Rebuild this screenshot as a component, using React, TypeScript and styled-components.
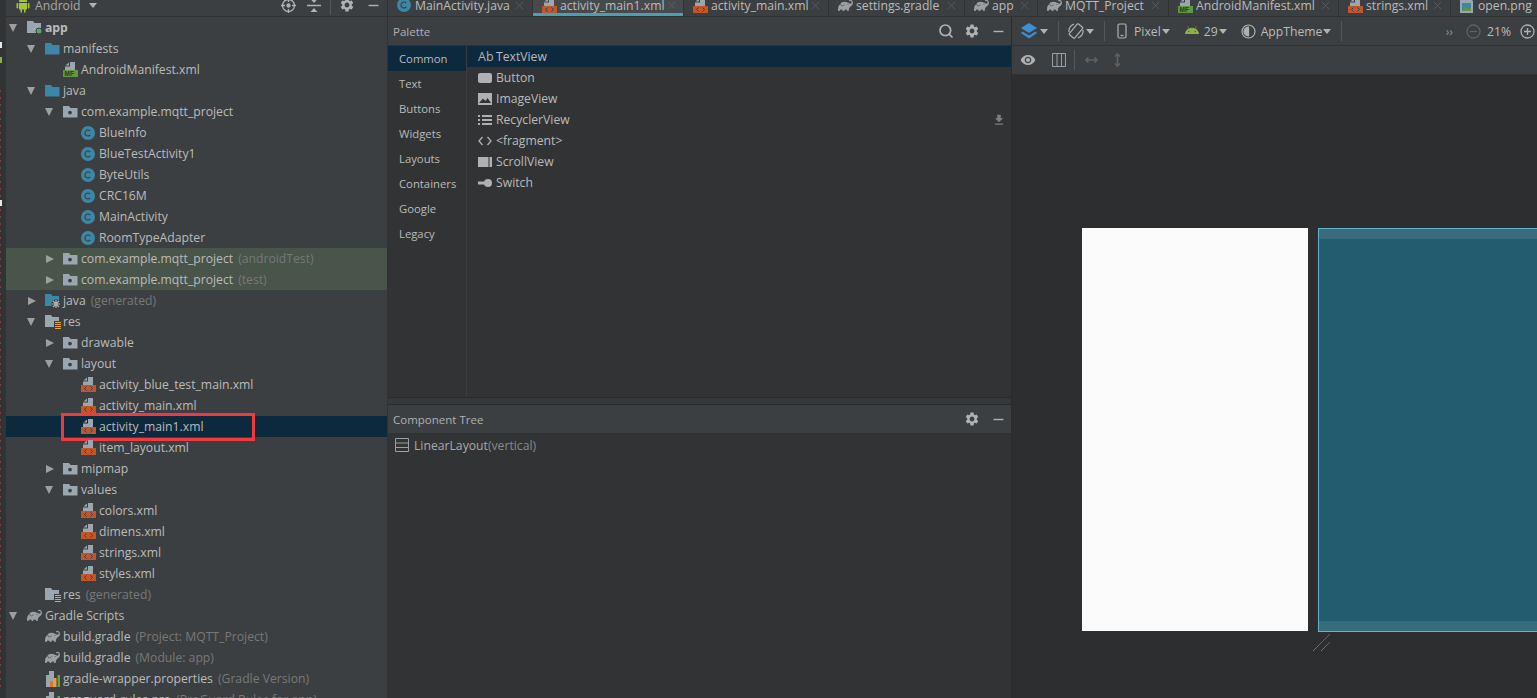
import React from 'react'
import styled, { createGlobalStyle } from 'styled-components'
import { MdSettings, MdRemove, MdVisibility, MdFileDownload } from 'react-icons/md'
import { FaAndroid } from 'react-icons/fa'
import { SiGradle } from 'react-icons/si'
import { Search, X } from 'lucide-react'

const GlobalStyle = createGlobalStyle`
  html, body {
    margin: 0;
    height: 698px;
    overflow: hidden;
    background: #3c3f41;
  }
  #root {
    height: 698px;
  }
  * {
    box-sizing: border-box;
  }
`

const Shell = styled.div`
  display: grid;
  grid-template-columns: 6px 382px 1fr;
  height: 698px;
  overflow: hidden;
  color: #bbbbbb;
  font-family: 'Open Sans', 'Liberation Sans', sans-serif;
  font-size: 12.2px;
  white-space: nowrap;
`

const Gutter = styled.div`
  background:
    repeating-linear-gradient(180deg, #8a3a3a 0 2px, transparent 2px 7px) left 90px / 1px 600px no-repeat,
    #313335;
  position: relative;
`

const GutterMark = styled.span<{ $top: number; $color: string }>`
  position: absolute;
  left: 0;
  top: ${(p) => p.$top}px;
  width: 2px;
  height: 6px;
  background: ${(p) => p.$color};
`

const ProjectPane = styled.aside`
  display: flex;
  flex-direction: column;
  overflow: hidden;
  background: #3c3f41;
  border-right: 1px solid #323232;
`

const TopBar = styled.div`
  flex: none;
  height: 17px;
  border-bottom: 1px solid #323232;
  overflow: hidden;
`

const ProjectHeaderRow = styled.div`
  display: flex;
  align-items: center;
  height: 22px;
  margin-top: -6px;
  padding-left: 10px;
  color: #a8a8a8;
`

const HeaderTool = styled.span<{ $left?: number }>`
  flex: none;
  display: inline-flex;
  align-items: center;
  justify-content: center;
  width: 26px;
  color: #afb1b3;
  margin-left: ${(p) => p.$left ?? 0}px;
`

const Caret = styled.span<{ $left?: number; $color?: string }>`
  flex: none;
  display: inline-block;
  width: 0;
  height: 0;
  margin-left: ${(p) => p.$left ?? 3}px;
  border-left: 4.5px solid transparent;
  border-right: 4.5px solid transparent;
  border-top: 5px solid ${(p) => p.$color ?? '#afb1b3'};
`

const Tree = styled.div`
  flex: 1;
  overflow: hidden;
`

const Row = styled.div<{ $depth: number; $tone?: 'selected' | 'test' }>`
  position: relative;
  display: flex;
  align-items: center;
  height: 21px;
  padding-left: ${(p) => 3 + p.$depth * 18}px;
  background: ${(p) => (p.$tone === 'selected' ? '#0d293e' : p.$tone === 'test' ? '#49544a' : 'transparent')};
`

const ArrowSlot = styled.span`
  flex: none;
  display: flex;
  align-items: center;
  width: 18px;
`

const Arrow = styled.span<{ $open: boolean }>`
  width: 0;
  height: 0;
  ${(p) =>
    p.$open
      ? `
    border-left: 4.5px solid transparent;
    border-right: 4.5px solid transparent;
    border-top: 8px solid #9da0a2;
  `
      : `
    margin-left: 1px;
    border-top: 4.5px solid transparent;
    border-bottom: 4.5px solid transparent;
    border-left: 8px solid #9da0a2;
  `}
`

const IconSlot = styled.span`
  flex: none;
  display: flex;
  align-items: center;
  width: 18px;
  height: 16px;
  color: #9aa0a4;
`

const Label = styled.span<{ $bold?: boolean }>`
  font-weight: ${(p) => (p.$bold ? 700 : 400)};
`

const Note = styled.span`
  margin-left: 5px;
  color: #787878;
`

const RedBox = styled.span`
  position: absolute;
  left: 55px;
  top: -3px;
  width: 194px;
  height: 28px;
  border: 3px solid #f03a3f;
`

const Workspace = styled.main`
  display: flex;
  flex-direction: column;
  overflow: hidden;
  min-width: 0;
`

const TabStrip = styled(TopBar)`
  background: #3c3f41;
`

const TabRow = styled.div`
  display: flex;
  height: 22px;
  margin-top: -6px;
  overflow: hidden;
`

const Tab = styled.div<{ $width: number; $active?: boolean }>`
  flex: none;
  position: relative;
  display: flex;
  align-items: center;
  width: ${(p) => p.$width}px;
  height: 22px;
  padding-left: 9px;
  border-right: 1px solid #323232;
  background: ${(p) => (p.$active ? '#474a4c' : 'transparent')};
  &::after {
    content: '';
    display: ${(p) => (p.$active ? 'block' : 'none')};
    position: absolute;
    left: 0;
    right: 0;
    bottom: 0;
    height: 3px;
    background: #4a9eb5;
  }
`

const TabClose = styled.span`
  display: flex;
  margin-left: auto;
  margin-right: 6px;
  color: #5f6264;
`

const Panes = styled.div`
  flex: 1;
  display: grid;
  grid-template-columns: 624px 1fr;
  min-height: 0;
`

const LeftPanes = styled.div`
  display: flex;
  flex-direction: column;
  background: #313335;
  border-right: 1px solid #2b2b2b;
  min-height: 0;
`

const PaneHeader = styled.div`
  flex: none;
  display: flex;
  align-items: center;
  height: 29px;
  padding: 0 0 0 5px;
  background: #3c3f41;
  border-bottom: 1px solid #323232;
  font-size: 11.5px;
  color: #b0b0b0;
`

const PaneTools = styled.div`
  margin-left: auto;
  display: flex;
  align-items: center;
`

const PaneTool = styled.span`
  display: inline-flex;
  justify-content: center;
  width: 26px;
  color: #afb1b3;
`

const PaletteBody = styled.div`
  height: 351px;
  display: grid;
  grid-template-columns: 79px 1fr;
`

const Categories = styled.div`
  border-right: 1px solid #3a3c3e;
`

const Category = styled.div<{ $selected?: boolean }>`
  display: flex;
  align-items: center;
  height: 25px;
  padding-left: 11px;
  font-size: 11.3px;
  background: ${(p) => (p.$selected ? '#0d293e' : 'transparent')};
`

const Widgets = styled.div`
  display: flex;
  flex-direction: column;
`

const Widget = styled.div<{ $selected?: boolean }>`
  display: flex;
  align-items: center;
  height: 21px;
  padding: 0 5px 0 11px;
  background: ${(p) => (p.$selected ? '#0d293e' : 'transparent')};
`

const WidgetIcon = styled.span`
  flex: none;
  display: flex;
  align-items: center;
  width: 18px;
  font-size: 12.5px;
  color: #afb1b3;
`

const DownloadSlot = styled.span`
  margin-left: auto;
  display: flex;
  color: #7d8083;
`

const Divider = styled.div`
  flex: none;
  height: 8px;
  background: #36393b;
  border-top: 1px solid #2b2b2b;
  border-bottom: 1px solid #2b2b2b;
`

const TreeBody = styled.div`
  flex: 1;
`

const ComponentRow = styled.div`
  display: flex;
  align-items: center;
  height: 22px;
  padding-left: 7px;
  color: #a9a9a9;
`

const ComponentNote = styled.span`
  color: #8a8a8a;
`

const DesignPane = styled.div`
  display: flex;
  flex-direction: column;
  min-width: 0;
  overflow: hidden;
  background: #2d2e30;
`

const Toolbar = styled.div`
  flex: none;
  display: flex;
  align-items: center;
  height: 29px;
  background: #3c3f41;
  border-bottom: 1px solid #323232;
`

const ToolSeparator = styled.span<{ $left: number; $right: number }>`
  flex: none;
  width: 1px;
  height: 20px;
  background: #55585a;
  margin: 0 ${(p) => p.$right}px 0 ${(p) => p.$left}px;
`

const ToolText = styled.span<{ $left?: number }>`
  margin-left: ${(p) => p.$left ?? 0}px;
`

const ZoomGroup = styled.div`
  margin-left: auto;
  display: flex;
  align-items: center;
  margin-right: 1px;
`

const Chevrons = styled.span`
  color: #8f9193;
  font-size: 12px;
  margin-right: 13px;
`

const Canvas = styled.div`
  flex: 1;
  display: flex;
  gap: 10px;
  padding: 153px 0 0 70px;
  overflow: hidden;
  align-items: flex-start;
`

const DeviceScreen = styled.div`
  flex: none;
  width: 226px;
  height: 403px;
  background: #fbfbfb;
`

const Blueprint = styled.div`
  flex: none;
  position: relative;
  width: 226px;
  height: 404px;
  background: #235c6e;
  border: 1px solid #63b5c9;
  border-right: none;
  &::before,
  &::after {
    content: '';
    position: absolute;
    left: 0;
    right: 0;
    height: 10px;
    background: #366c7c;
  }
  &::before {
    top: 0;
  }
  &::after {
    bottom: 0;
  }
`

const Handle = styled.svg`
  position: absolute;
  left: -6px;
  top: 405px;
`

const FolderIcon = ({ color = '#9aa7b0', dot }: { color?: string; dot?: boolean }) => (
  <svg width="15" height="13" viewBox="0 0 15 13">
    <path d="M0 1h6l1.5 2H14.500v9.500H0z" fill={color} />
    {dot && <circle cx="7" cy="7.600" r="1.900" fill="#3c3f41" />}
  </svg>
)

const ModuleIcon = () => (
  <svg width="16" height="15" viewBox="0 0 16 15">
    <path d="M0 1h6l1.500 2H14v10H0z" fill="#9aa7b0" />
    <circle cx="12" cy="11" r="3" fill="#59a869" stroke="#3c3f41" />
  </svg>
)

const GeneratedIcon = () => (
  <svg width="17" height="16" viewBox="0 0 17 16">
    <path d="M0 1h6l1.500 2H14v10H0z" fill="#3d87a6" />
    <circle cx="11" cy="11" r="4.500" fill="#3c3f41" />
    <path d="M11 7v8M7 11h8M8 8l6 6M14 8l-6 6" stroke="#aab0b4" strokeWidth="1.200" />
  </svg>
)

const ResIcon = () => (
  <svg width="17" height="16" viewBox="0 0 17 16">
    <path d="M0 1h6l1.500 2H14v10H0z" fill="#9aa7b0" />
    <rect x="9" y="7" width="8" height="9" fill="#3c3f41" />
    <path d="M10 8.500h6M10 10.500h6M10 12.500h6M10 14.500h6" stroke="#e8a33d" />
  </svg>
)

const ClassIcon = () => (
  <svg width="14" height="14" viewBox="0 0 14 14">
    <circle cx="7" cy="7" r="7" fill="#3c87a5" />
    <path d="M9.200 5a3 3 0 1 0 0 4" fill="none" stroke="#3c3f41" strokeWidth="1.200" />
  </svg>
)

const XmlIcon = () => (
  <svg width="15" height="15" viewBox="0 0 15 15">
    <path d="M7 0h5v8H2V4.500h5z" fill="#9aa7b0" />
    <path d="M6 .5v3H2.500z" fill="#9aa7b0" />
    <rect y="8" width="15" height="7" fill="#c0562a" />
    <path d="M5.500 9.500 3.500 11.500l2 2M9.500 9.500l2 2-2 2" fill="none" stroke="#3c3f41" />
  </svg>
)

const ManifestIcon = () => (
  <svg width="15" height="15" viewBox="0 0 15 15">
    <path d="M7 0h5v8H2V4.500h5z" fill="#9aa7b0" />
    <path d="M6 .5v3H2.500z" fill="#9aa7b0" />
    <rect y="8" width="15" height="7" fill="#62963f" />
    <text x="1.500" y="14" fontSize="6.500" fontWeight="700" fill="#2f3a2a" fontFamily="Liberation Sans, sans-serif">MF</text>
  </svg>
)

const PropsIcon = () => (
  <svg width="15" height="16" viewBox="0 0 15 16">
    <path d="M4 0h5v16H1V4h3z" fill="#9aa7b0" />
    <rect x="5" y="10" width="3" height="6" fill="#e0752d" />
    <rect x="9" y="7" width="2.500" height="9" fill="#e8a33d" />
    <rect x="12.500" y="4" width="2.500" height="12" fill="#62a33f" />
  </svg>
)

const PngIcon = () => (
  <svg width="13" height="16" viewBox="0 0 13 16">
    <path d="M0 0h9l4 4v12H0z" fill="#9aa7b0" />
    <rect x="2" y="6" width="9" height="8" fill="#3d87a6" />
    <path d="M2 14l3-4 3 2 3-1v3z" fill="#62963f" />
  </svg>
)

const AndroidRobot = () => (
  <svg width="14" height="16" viewBox="0 0 14 16" fill="#a4c639" style={{ flex: 'none' }}>
    <path d="M3 5a4 4 0 0 1 8 0z" />
    <path d="M3 6h8v6.500H9.500V15.500h-1.500v-3H6v3H4.500v-3H3z" />
    <rect x="0.500" y="6" width="1.700" height="5.500" rx="0.800" />
    <rect x="11.800" y="6" width="1.700" height="5.500" rx="0.800" />
  </svg>
)

const GradleIcon = ({ color = '#9aa0a4' }: { color?: string }) => <SiGradle size={15} color={color} />

type IconName = 'module' | 'folder' | 'package' | 'gen' | 'res' | 'class' | 'xml' | 'manifest' | 'gradle' | 'props'

const iconFor = (name: IconName) => {
  switch (name) {
    case 'module': return <ModuleIcon />
    case 'folder': return <FolderIcon color="#3d87a6" />
    case 'package': return <FolderIcon dot />
    case 'gen': return <GeneratedIcon />
    case 'res': return <ResIcon />
    case 'class': return <ClassIcon />
    case 'xml': return <XmlIcon />
    case 'manifest': return <ManifestIcon />
    case 'gradle': return <GradleIcon />
    case 'props': return <PropsIcon />
  }
}

type Node = {
  depth: number
  arrow?: 'open' | 'closed'
  icon: IconName
  label: string
  note?: string
  bold?: boolean
  tone?: 'selected' | 'test'
  boxed?: boolean
}

const nodes: Node[] = [
  { depth: 0, arrow: 'open', icon: 'module', label: 'app', bold: true },
  { depth: 1, arrow: 'open', icon: 'folder', label: 'manifests' },
  { depth: 2, icon: 'manifest', label: 'AndroidManifest.xml' },
  { depth: 1, arrow: 'open', icon: 'folder', label: 'java' },
  { depth: 2, arrow: 'open', icon: 'package', label: 'com.example.mqtt_project' },
  { depth: 3, icon: 'class', label: 'BlueInfo' },
  { depth: 3, icon: 'class', label: 'BlueTestActivity1' },
  { depth: 3, icon: 'class', label: 'ByteUtils' },
  { depth: 3, icon: 'class', label: 'CRC16M' },
  { depth: 3, icon: 'class', label: 'MainActivity' },
  { depth: 3, icon: 'class', label: 'RoomTypeAdapter' },
  { depth: 2, arrow: 'closed', icon: 'package', label: 'com.example.mqtt_project', note: '(androidTest)', tone: 'test' },
  { depth: 2, arrow: 'closed', icon: 'package', label: 'com.example.mqtt_project', note: '(test)', tone: 'test' },
  { depth: 1, arrow: 'closed', icon: 'gen', label: 'java', note: '(generated)' },
  { depth: 1, arrow: 'open', icon: 'res', label: 'res' },
  { depth: 2, arrow: 'closed', icon: 'package', label: 'drawable' },
  { depth: 2, arrow: 'open', icon: 'package', label: 'layout' },
  { depth: 3, icon: 'xml', label: 'activity_blue_test_main.xml' },
  { depth: 3, icon: 'xml', label: 'activity_main.xml' },
  { depth: 3, icon: 'xml', label: 'activity_main1.xml', tone: 'selected', boxed: true },
  { depth: 3, icon: 'xml', label: 'item_layout.xml' },
  { depth: 2, arrow: 'closed', icon: 'package', label: 'mipmap' },
  { depth: 2, arrow: 'open', icon: 'package', label: 'values' },
  { depth: 3, icon: 'xml', label: 'colors.xml' },
  { depth: 3, icon: 'xml', label: 'dimens.xml' },
  { depth: 3, icon: 'xml', label: 'strings.xml' },
  { depth: 3, icon: 'xml', label: 'styles.xml' },
  { depth: 1, icon: 'res', label: 'res', note: '(generated)' },
  { depth: 0, arrow: 'open', icon: 'gradle', label: 'Gradle Scripts' },
  { depth: 1, icon: 'gradle', label: 'build.gradle', note: '(Project: MQTT_Project)' },
  { depth: 1, icon: 'gradle', label: 'build.gradle', note: '(Module: app)' },
  { depth: 1, icon: 'props', label: 'gradle-wrapper.properties', note: '(Gradle Version)' },
  { depth: 1, icon: 'props', label: 'proguard-rules.pro', note: '(ProGuard Rules for app)' },
]

type TabInfo = { label: string; width: number; icon: React.ReactNode; active?: boolean }

const tabs: TabInfo[] = [
  { label: 'MainActivity.java', width: 145, icon: <ClassIcon /> },
  { label: 'activity_main1.xml', width: 151, icon: <XmlIcon />, active: true },
  { label: 'activity_main.xml', width: 145, icon: <XmlIcon /> },
  { label: 'settings.gradle', width: 136, icon: <GradleIcon /> },
  { label: 'app', width: 73, icon: <GradleIcon /> },
  { label: 'MQTT_Project', width: 131, icon: <GradleIcon /> },
  { label: 'AndroidManifest.xml', width: 170, icon: <ManifestIcon /> },
  { label: 'strings.xml', width: 112, icon: <XmlIcon /> },
  { label: 'open.png', width: 120, icon: <PngIcon /> },
]

const categories = ['Common', 'Text', 'Buttons', 'Widgets', 'Layouts', 'Containers', 'Google', 'Legacy']

const widgets: { label: string; icon: React.ReactNode }[] = [
  { label: 'TextView', icon: 'Ab' },
  {
    label: 'Button',
    icon: (
      <svg width="14" height="10" viewBox="0 0 14 10">
        <rect width="14" height="10" rx="2" fill="#afb1b3" />
      </svg>
    ),
  },
  {
    label: 'ImageView',
    icon: (
      <svg width="14" height="12" viewBox="0 0 14 12">
        <path d="M0 0h14v12H0zM1 10h12L9.500 5 7.500 8 5 5.500z" fill="#afb1b3" fillRule="evenodd" />
      </svg>
    ),
  },
  {
    label: 'RecyclerView',
    icon: (
      <svg width="14" height="10" viewBox="0 0 14 10" fill="#afb1b3">
        <path d="M0 0h2v2H0zM4 0h10v2H4zM0 4h2v2H0zM4 4h10v2H4zM0 8h2v2H0zM4 8h10v2H4z" />
      </svg>
    ),
  },
  {
    label: '<fragment>',
    icon: (
      <svg width="14" height="10" viewBox="0 0 14 10" fill="none" stroke="#afb1b3" strokeWidth="1.300">
        <path d="M4.500 1 1 5l3.500 4M9.500 1 13 5l-3.500 4" />
      </svg>
    ),
  },
  {
    label: 'ScrollView',
    icon: (
      <svg width="14" height="10" viewBox="0 0 14 10" fill="#afb1b3">
        <path d="M0 0h10.500v10H0zM11.500 0H14v10h-2.500z" />
      </svg>
    ),
  },
  {
    label: 'Switch',
    icon: (
      <svg width="14" height="8" viewBox="0 0 14 8" fill="#afb1b3">
        <rect y="2.500" width="7" height="3" />
        <circle cx="10" cy="4" r="4" />
      </svg>
    ),
  },
]

const ToolIcon = ({ children, width = 16 }: { children: React.ReactNode; width?: number }) => (
  <svg width={width} height="16" viewBox={`0 0 ${width} 16`} fill="none" stroke="#afb1b3" strokeWidth="1.200" style={{ flex: 'none' }}>
    {children}
  </svg>
)

export default function App() {
  return (
    <>
      <GlobalStyle />
      <Shell>
        <Gutter>
          <GutterMark $top={42} $color="#e8e8e8" />
          <GutterMark $top={57} $color="#8ab04a" />
          <GutterMark $top={200} $color="#e8e8e8" />
        </Gutter>

        <ProjectPane>
          <TopBar>
            <ProjectHeaderRow>
              <AndroidRobot />
              <ToolText $left={5}>Android</ToolText>
              <Caret $left={9} />
              <HeaderTool $left={178}>
                <svg width="15" height="15" viewBox="0 0 15 15" fill="none" stroke="#afb1b3" strokeWidth="1.300">
                  <circle cx="7.500" cy="7.500" r="6" />
                  <circle cx="7.500" cy="7.500" r="1.500" fill="#afb1b3" />
                  <path d="M7.500 0v4M7.500 11v4M0 7.500h4M11 7.500h4" />
                </svg>
              </HeaderTool>
              <HeaderTool>
                <svg width="14" height="15" viewBox="0 0 14 15" fill="#afb1b3">
                  <path d="M0 6.800h14v1.400H0zM7 5 3.500 1h7zM7 10l3.500 4h-7z" />
                </svg>
              </HeaderTool>
              <ToolSeparator $left={3} $right={3} />
              <HeaderTool>
                <MdSettings size={16} />
              </HeaderTool>
              <HeaderTool>
                <MdRemove size={17} />
              </HeaderTool>
            </ProjectHeaderRow>
          </TopBar>
          <Tree>
            {nodes.map((node, index) => (
              <Row key={index} $depth={node.depth} $tone={node.tone}>
                <ArrowSlot>{node.arrow && <Arrow $open={node.arrow === 'open'} />}</ArrowSlot>
                <IconSlot>{iconFor(node.icon)}</IconSlot>
                <Label $bold={node.bold}>{node.label}</Label>
                {node.note && <Note>{node.note}</Note>}
                {node.boxed && <RedBox />}
              </Row>
            ))}
          </Tree>
        </ProjectPane>

        <Workspace>
          <TabStrip>
            <TabRow>
              {tabs.map((tab) => (
                <Tab key={tab.label} $width={tab.width} $active={tab.active}>
                  <IconSlot>{tab.icon}</IconSlot>
                  <span>{tab.label}</span>
                  <TabClose>
                    <X size={13} strokeWidth={1.300} />
                  </TabClose>
                </Tab>
              ))}
            </TabRow>
          </TabStrip>

          <Panes>
            <LeftPanes>
              <PaneHeader>
                Palette
                <PaneTools>
                  <PaneTool>
                    <Search size={16} strokeWidth={2.600} />
                  </PaneTool>
                  <PaneTool>
                    <MdSettings size={16} />
                  </PaneTool>
                  <PaneTool>
                    <MdRemove size={17} />
                  </PaneTool>
                </PaneTools>
              </PaneHeader>
              <PaletteBody>
                <Categories>
                  {categories.map((name, index) => (
                    <Category key={name} $selected={index === 0}>
                      {name}
                    </Category>
                  ))}
                </Categories>
                <Widgets>
                  {widgets.map((widget, index) => (
                    <Widget key={widget.label} $selected={index === 0}>
                      <WidgetIcon>{widget.icon}</WidgetIcon>
                      {widget.label}
                      {widget.label === 'RecyclerView' && (
                        <DownloadSlot>
                          <MdFileDownload size={14} />
                        </DownloadSlot>
                      )}
                    </Widget>
                  ))}
                </Widgets>
              </PaletteBody>
              <Divider />
              <PaneHeader>
                Component Tree
                <PaneTools>
                  <PaneTool>
                    <MdSettings size={16} />
                  </PaneTool>
                  <PaneTool>
                    <MdRemove size={17} />
                  </PaneTool>
                </PaneTools>
              </PaneHeader>
              <TreeBody>
                <ComponentRow>
                  <svg width="14" height="14" viewBox="0 0 14 14" fill="none" stroke="#9da0a2" style={{ marginRight: 5 }}>
                    <path d="M.5.500h13v13H.500zM.5 5h13M.5 9.500h13" />
                  </svg>
                  LinearLayout<ComponentNote>(vertical)</ComponentNote>
                </ComponentRow>
              </TreeBody>
            </LeftPanes>

            <DesignPane>
              <Toolbar>
                <svg width="18" height="16" viewBox="0 0 18 16" style={{ marginLeft: 8, flex: 'none' }}>
                  <path d="M9 0l8 5-8 5-8-5z" fill="#3d8fd1" />
                  <path d="M2.500 8.500 9 12.500l6.500-4L17 10l-8 5.500L1 10z" fill="#3d8fd1" />
                </svg>
                <Caret $left={2} />
                <ToolSeparator $left={10} $right={9} />
                <ToolIcon>
                  <g transform="rotate(40 8 8)">
                    <rect x="4.500" y="1" width="7" height="14" rx="1" />
                  </g>
                  <path d="M1 9A7 7 0 0 1 6 1.200M15 7a7 7 0 0 1-5 7.800" />
                </ToolIcon>
                <Caret $left={2} />
                <ToolSeparator $left={10} $right={12} />
                <ToolIcon width={10}>
                  <rect x="1" y="1" width="8" height="14" rx="1.500" />
                  <path d="M3.500 12.500h3" />
                </ToolIcon>
                <ToolText $left={7}>Pixel</ToolText>
                <Caret $left={1} />
                <FaAndroid size={14} color="#8ab04a" style={{ marginLeft: 15, flex: 'none' }} />
                <ToolText $left={5}>29</ToolText>
                <Caret $left={1} />
                <svg width="15" height="15" viewBox="0 0 15 15" style={{ marginLeft: 14, flex: 'none' }} fill="none" stroke="#afb1b3" strokeWidth="1.200">
                  <circle cx="7.500" cy="7.500" r="6.500" />
                  <path d="M7.500 3a4.500 4.500 0 0 0 0 9z" fill="#afb1b3" />
                </svg>
                <ToolText $left={5}>AppTheme</ToolText>
                <Caret $left={1} />
                <ToolSeparator $left={10} $right={0} />
                <ZoomGroup>
                  <Chevrons>››</Chevrons>
                  <svg width="15" height="15" viewBox="0 0 15 15" fill="none" stroke="#5f6264" strokeWidth="1.300">
                    <circle cx="7.500" cy="7.500" r="6.500" />
                    <path d="M4 7.500h7" />
                  </svg>
                  <ToolText $left={6}>21%</ToolText>
                  <svg width="15" height="15" viewBox="0 0 15 15" style={{ marginLeft: 9, marginRight: 1 }} fill="none" stroke="#afb1b3" strokeWidth="1.300">
                    <circle cx="7.500" cy="7.500" r="6.500" />
                    <path d="M4 7.500h7M7.500 4v7" />
                  </svg>
                </ZoomGroup>
              </Toolbar>
              <Toolbar>
                <MdVisibility size={16} color="#afb1b3" style={{ marginLeft: 8, flex: 'none' }} />
                <svg width="14" height="14" viewBox="0 0 14 14" style={{ marginLeft: 16, flex: 'none' }} fill="none" stroke="#9aa0a8">
                  <path d="M.5.500h13v13H.500zM5 .5v13M9.500.5v13" />
                </svg>
                <ToolSeparator $left={8} $right={10} />
                <ToolIcon width={13}>
                  <path d="M1 8h11M3.500 5.500 1 8l2.500 2.500M9.500 5.500 12 8l-2.500 2.500" stroke="#5f6264" strokeWidth="1.600" />
                </ToolIcon>
                <svg width="9" height="14" viewBox="0 0 9 14" style={{ marginLeft: 15, flex: 'none' }} fill="none" stroke="#5f6264" strokeWidth="1.600">
                  <path d="M4.500 1v12M2 3.500 4.500 1 7 3.500M2 10.500 4.500 13 7 10.500" />
                </svg>
              </Toolbar>
              <Canvas>
                <DeviceScreen />
                <Blueprint>
                  <Handle width="18" height="18" viewBox="0 0 18 18" fill="none" stroke="#8a8c8e" strokeDasharray="1 0.500">
                    <path d="M0 17 17 0M8 17 17 8" />
                  </Handle>
                </Blueprint>
              </Canvas>
            </DesignPane>
          </Panes>
        </Workspace>
      </Shell>
    </>
  )
}
